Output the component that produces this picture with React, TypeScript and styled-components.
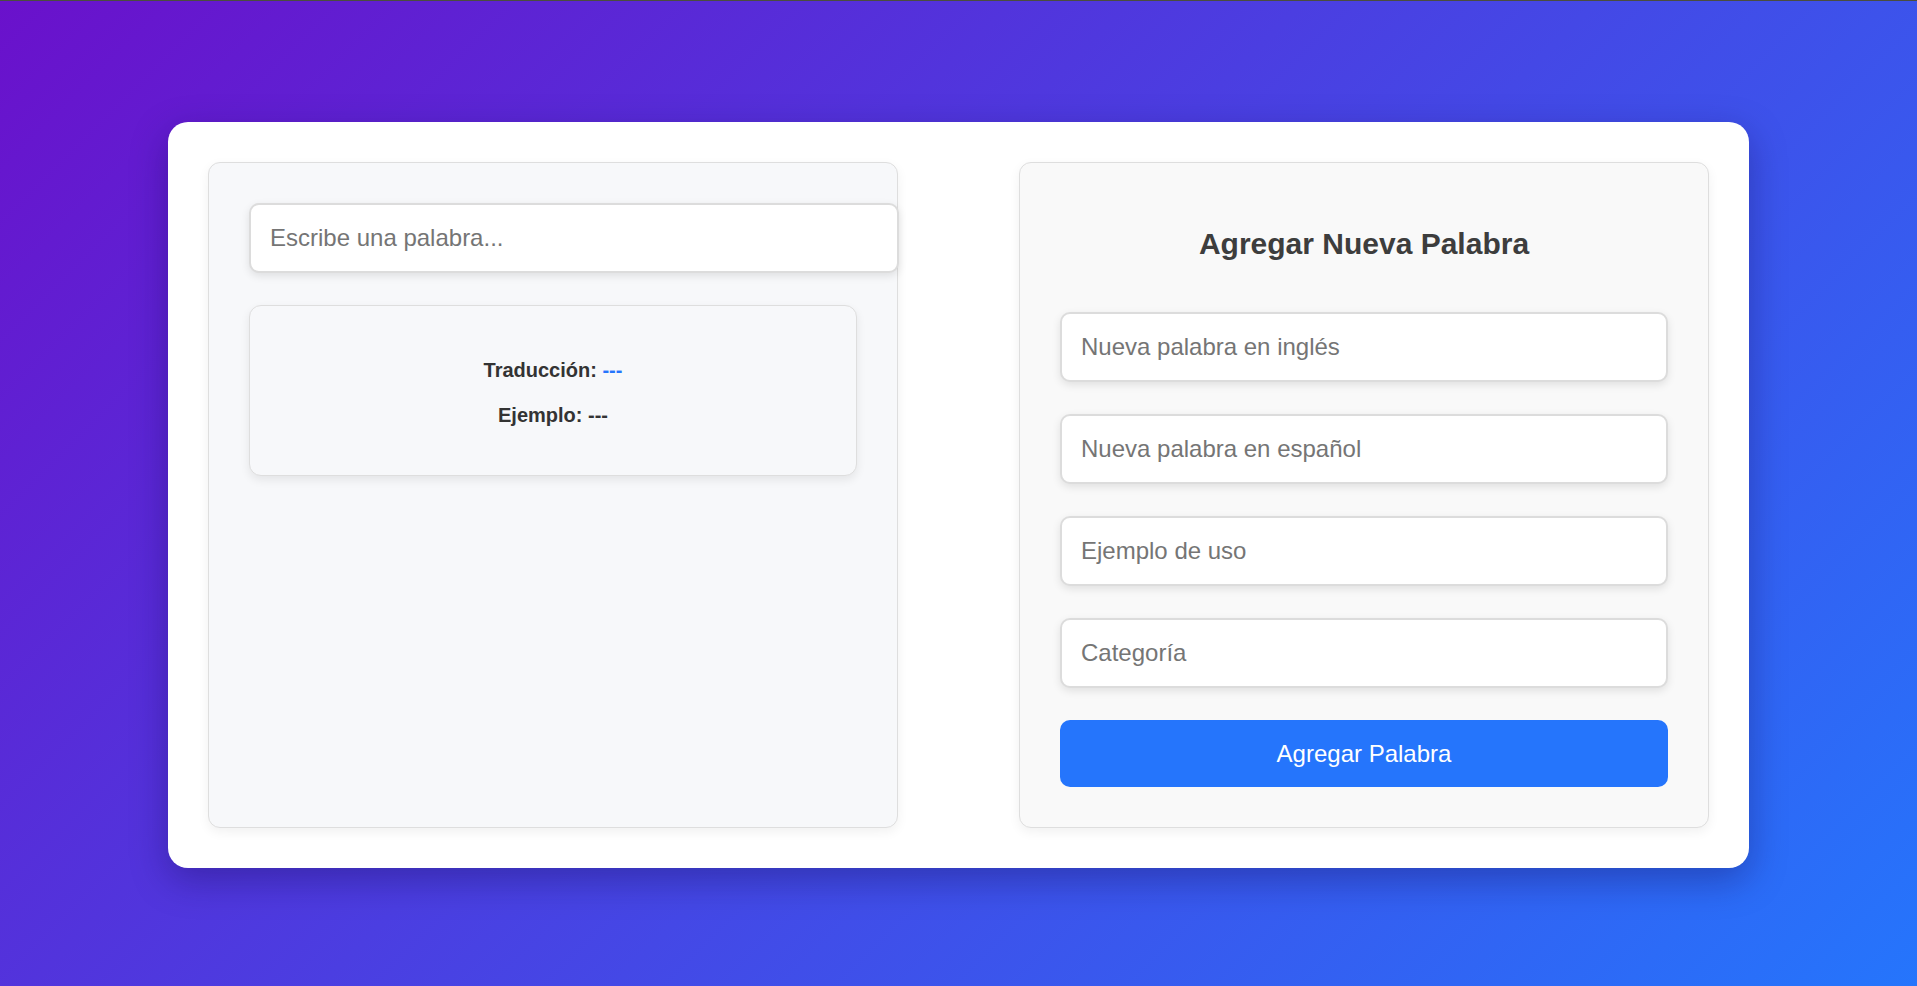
import React from "react";
import styled, { createGlobalStyle } from "styled-components";

const GlobalStyle = createGlobalStyle`
  html, body {
    margin: 0;
    padding: 0;
  }
  body {
    font-family: "Liberation Sans", Arial, sans-serif;
    background: linear-gradient(135deg, #6a11cb 0%, #2575fc 100%);
    min-height: 100vh;
    border-top: 1px solid #4a4d3f;
    box-sizing: border-box;
  }
  * {
    font-family: "Liberation Sans", Arial, sans-serif;
  }
`;

const Page = styled.div`
  min-height: 985px;
  box-sizing: border-box;
  padding-top: 3px;
  display: flex;
  align-items: center;
  justify-content: center;
`;

const Card = styled.main`
  width: 1581px;
  box-sizing: border-box;
  background: #ffffff;
  border-radius: 20px;
  padding: 40px;
  box-shadow: 0 12px 36px rgba(20, 10, 80, 0.35);
  display: grid;
  grid-template-columns: 1fr 1fr;
  column-gap: 121px;
`;

const Panel = styled.section<{ $bg: string }>`
  background: ${(p) => p.$bg};
  border: 1px solid #dedede;
  border-radius: 12px;
  padding: 40px;
  box-shadow: 0 4px 12px rgba(0, 0, 0, 0.06);
  display: flex;
  flex-direction: column;
  min-width: 0;
`;

const SearchInput = styled.input`
  box-sizing: content-box;
  width: 100%;
  height: 66px;
  padding: 0 19px;
  border: 2px solid #dcdcdc;
  border-radius: 10px;
  background: #fff;
  font-size: 24px;
  color: #333;
  outline: none;
  box-shadow: 0 3px 8px rgba(0, 0, 0, 0.1);
  &::placeholder {
    color: #757575;
  }
`;

const ResultBox = styled.div`
  margin-top: 32px;
  height: 171px;
  box-sizing: border-box;
  background: #f7f8fa;
  border: 1px solid #dedede;
  border-radius: 12px;
  box-shadow: 0 4px 10px rgba(0, 0, 0, 0.08);
  padding: 53px 20px 0;
  display: flex;
  flex-direction: column;
  align-items: center;
  gap: 22px;
`;

const ResultLine = styled.p`
  margin: 0;
  font-size: 20px;
  line-height: 23px;
  font-weight: 700;
  color: #333;
`;

const Value = styled.span<{ $accent?: boolean }>`
  color: ${(p) => (p.$accent ? "#2575fc" : "#333")};
`;

const Title = styled.h2`
  margin: 24px 0 51px;
  font-size: 30px;
  line-height: 34px;
  font-weight: 700;
  color: #3d3d3d;
  text-align: center;
`;

const Form = styled.div`
  display: flex;
  flex-direction: column;
  gap: 32px;
`;

const FieldInput = styled.input`
  box-sizing: border-box;
  width: 100%;
  height: 70px;
  padding: 0 19px;
  border: 2px solid #dcdcdc;
  border-radius: 10px;
  background: #fff;
  font-size: 24px;
  color: #333;
  outline: none;
  box-shadow: 0 3px 8px rgba(0, 0, 0, 0.1);
  &::placeholder {
    color: #757575;
  }
`;

const SubmitButton = styled.button`
  height: 67px;
  width: 100%;
  border: none;
  border-radius: 10px;
  background: #2575fc;
  color: #fff;
  font-size: 24px;
  cursor: pointer;
`;

export default function App() {
  return (
    <>
      <GlobalStyle />
      <Page>
        <Card>
          <Panel $bg="#f7f8fa">
            <SearchInput placeholder="Escribe una palabra..." />
            <ResultBox>
              <ResultLine>
                Traducción: <Value $accent>---</Value>
              </ResultLine>
              <ResultLine>
                Ejemplo: <Value>---</Value>
              </ResultLine>
            </ResultBox>
          </Panel>
          <Panel $bg="#f9f9f9">
            <Title>Agregar Nueva Palabra</Title>
            <Form>
              <FieldInput placeholder="Nueva palabra en inglés" />
              <FieldInput placeholder="Nueva palabra en español" />
              <FieldInput placeholder="Ejemplo de uso" />
              <FieldInput placeholder="Categoría" />
              <SubmitButton>Agregar Palabra</SubmitButton>
            </Form>
          </Panel>
        </Card>
      </Page>
    </>
  );
}
